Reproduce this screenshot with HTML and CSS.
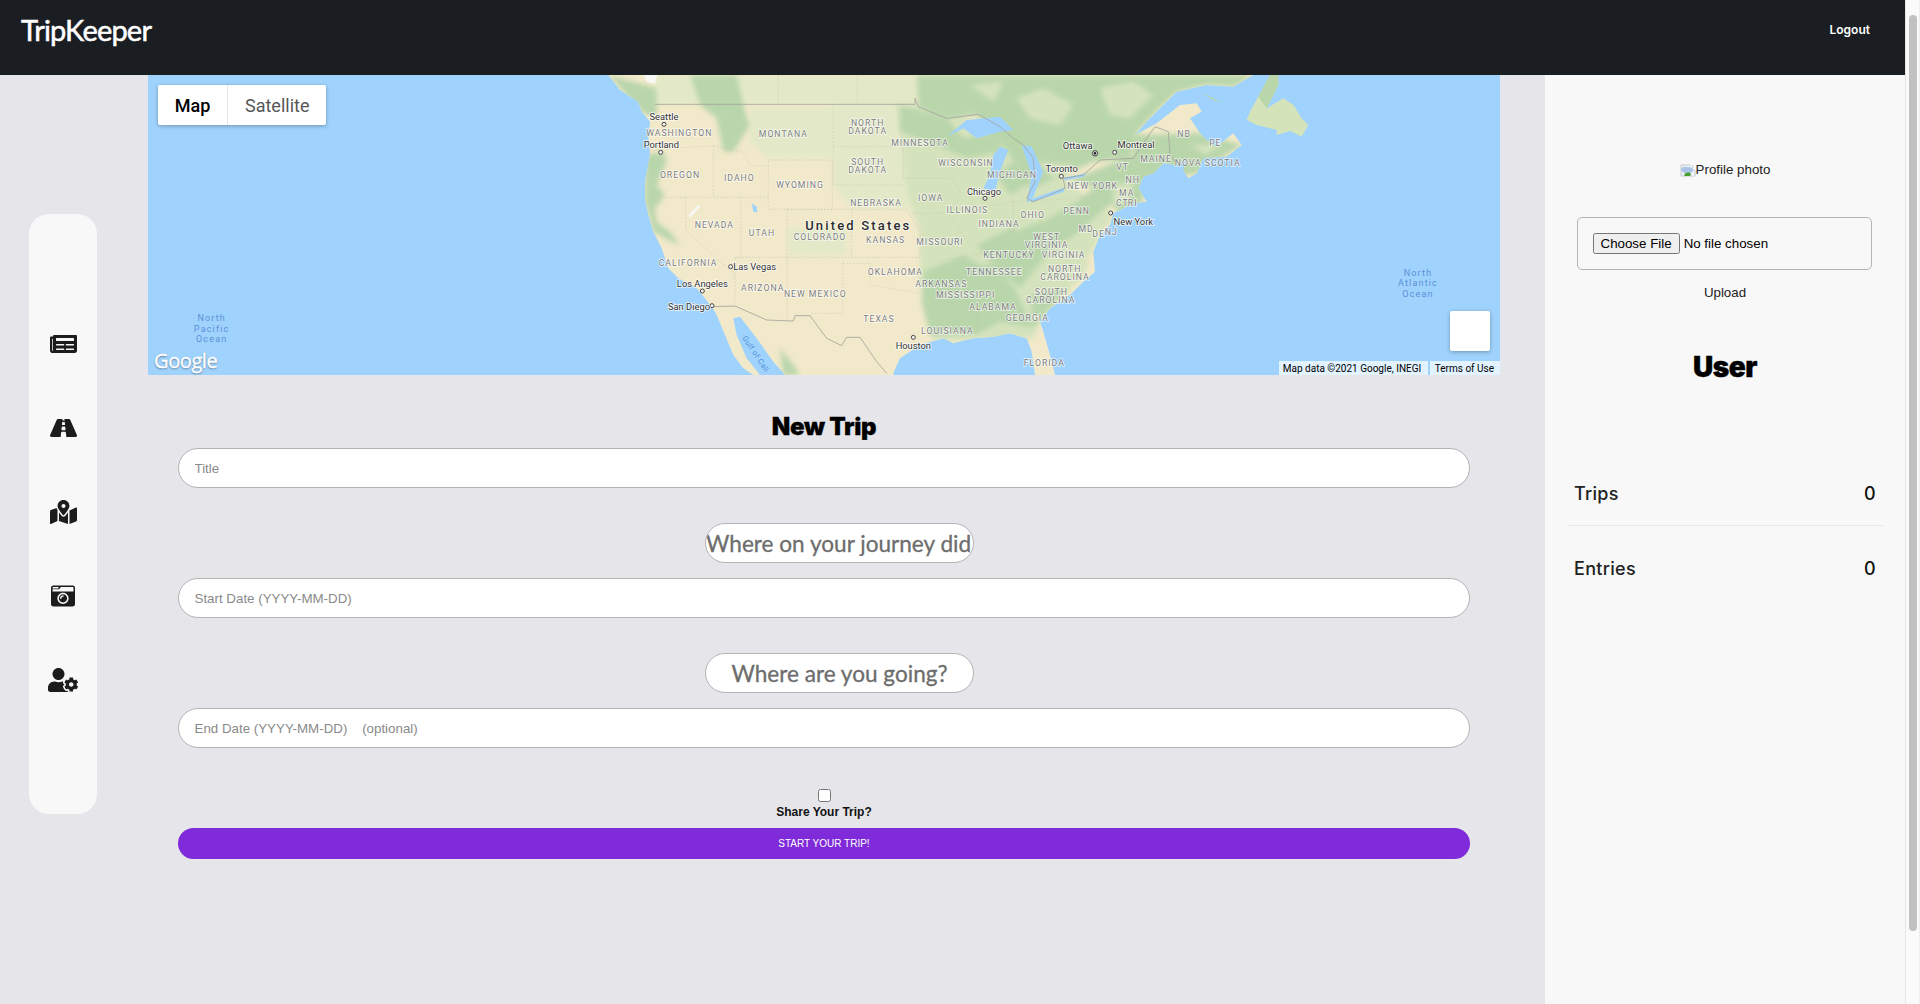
FILE: index.html
```html
<!DOCTYPE html>
<html lang="en">
<head>
<meta charset="utf-8">
<title>TripKeeper</title>
<link rel="stylesheet" href="styles.css">
</head>
<body>
<div class="window">
  <div class="page">
    <header class="topbar">
      <a class="logo">TripKeeper</a>
      <a class="logout">Logout</a>
    </header>
    <div class="content">
      <aside class="rail">
        <nav class="rail-pill">
          <svg class="icon" viewBox="0 0 576 512"><path d="M552 64H88c-13.255 0-24 10.745-24 24v8H24c-13.255 0-24 10.745-24 24v272c0 30.928 25.072 56 56 56h472c26.51 0 48-21.49 48-48V88c0-13.255-10.745-24-24-24zM56 400a8 8 0 0 1-8-8V144h16v248a8 8 0 0 1-8 8zm236-16H140c-6.627 0-12-5.373-12-12v-8c0-6.627 5.373-12 12-12h152c6.627 0 12 5.373 12 12v8c0 6.627-5.373 12-12 12zm208 0H348c-6.627 0-12-5.373-12-12v-8c0-6.627 5.373-12 12-12h152c6.627 0 12 5.373 12 12v8c0 6.627-5.373 12-12 12zm-208-96H140c-6.627 0-12-5.373-12-12v-8c0-6.627 5.373-12 12-12h152c6.627 0 12 5.373 12 12v8c0 6.627-5.373 12-12 12zm208 0H348c-6.627 0-12-5.373-12-12v-8c0-6.627 5.373-12 12-12h152c6.627 0 12 5.373 12 12v8c0 6.627-5.373 12-12 12zm0-96H140c-6.627 0-12-5.373-12-12v-40c0-6.627 5.373-12 12-12h360c6.627 0 12 5.373 12 12v40c0 6.627-5.373 12-12 12z"/></svg>
          <svg class="icon" viewBox="0 0 576 512"><path d="M573.19 402.67l-139.79-320C428.43 71.29 417.6 64 405.68 64h-97.59l2.45 23.16c.5 4.72-3.21 8.84-7.96 8.84h-29.16c-4.75 0-8.46-4.12-7.96-8.84L267.91 64h-97.59c-11.93 0-22.76 7.29-27.73 18.67L2.8 402.67C-6.45 423.86 8.31 448 30.54 448h196.84l10.31-97.68c.86-8.14 7.72-14.32 15.91-14.32h68.8c8.19 0 15.05 6.18 15.91 14.32L348.62 448h196.84c22.23 0 36.99-24.14 27.73-45.33zM260.4 135.16a8 8 0 0 1 7.96-7.16h39.29c4.09 0 7.53 3.09 7.96 7.16l4.6 43.58c.75 7.09-4.81 13.26-11.93 13.26h-40.54c-7.13 0-12.68-6.17-11.93-13.26l4.6-43.58zM315.64 304h-55.29c-9.5 0-16.91-8.23-15.91-17.68l5.07-48c.86-8.14 7.72-14.32 15.91-14.32h45.15c8.19 0 15.05 6.18 15.91 14.32l5.07 48c1 9.45-6.41 17.68-15.91 17.68z"/></svg>
          <svg class="icon" viewBox="0 0 576 512"><path d="M288 0c-69.59 0-126 56.41-126 126 0 56.26 82.35 158.8 113.9 196.02 6.39 7.54 17.82 7.54 24.2 0C331.65 284.8 414 182.26 414 126 414 56.41 357.59 0 288 0zm0 168c-23.2 0-42-18.8-42-42s18.8-42 42-42 42 18.8 42 42-18.8 42-42 42zM20.12 215.95A32.006 32.006 0 0 0 0 245.66v250.32c0 11.32 11.43 19.06 21.94 14.86L160 448V214.92c-8.84-15.98-16.07-31.54-21.25-46.42L20.12 215.95zM288 359.67c-14.07 0-27.38-6.18-36.51-16.96-19.66-23.2-40.57-49.62-59.49-76.72V448l192 64V265.99c-18.92 27.09-39.82 53.52-59.49 76.72-9.13 10.79-22.44 16.96-36.51 16.96zm266.06-198.51L416 224v288l139.88-55.95A31.996 31.996 0 0 0 576 426.34V176.02c0-11.32-11.43-19.06-21.94-14.86z"/></svg>
          <svg class="icon" viewBox="0 0 512 512"><path d="M48 32C21.5 32 0 53.5 0 80v352c0 26.5 21.5 48 48 48h416c26.5 0 48-21.5 48-48V80c0-26.5-21.5-48-48-48H48zm0 32h106c3.3 0 6 2.7 6 6v20c0 3.3-2.7 6-6 6H38c-3.3 0-6-2.7-6-6V80c0-8.8 7.2-16 16-16zm426 96H38c-3.3 0-6-2.7-6-6v-36c0-3.3 2.7-6 6-6h138l30.2-45.3c1.1-1.7 3-2.7 5-2.7H464c8.8 0 16 7.2 16 16v74c0 3.3-2.7 6-6 6zM256 424c-66.2 0-120-53.8-120-120s53.8-120 120-120 120 53.8 120 120-53.8 120-120 120zm0-208c-48.5 0-88 39.5-88 88s39.5 88 88 88 88-39.5 88-88-39.5-88-88-88zm-48 104c-8.8 0-16-7.2-16-16 0-35.3 28.7-64 64-64 8.8 0 16 7.2 16 16s-7.2 16-16 16c-17.6 0-32 14.4-32 32 0 8.8-7.2 16-16 16z"/></svg>
          <svg class="icon" viewBox="0 0 640 512"><path d="M610.5 373.3c2.6-14.1 2.6-28.5 0-42.6l25.8-14.9c3-1.7 4.3-5.2 3.3-8.5-6.7-21.6-18.2-41.2-33.2-57.4-2.3-2.5-6-3.1-9-1.4l-25.8 14.9c-10.9-9.3-23.4-16.5-36.9-21.3v-29.8c0-3.4-2.4-6.4-5.7-7.1-22.3-5-45-4.8-66.2 0-3.3.7-5.7 3.7-5.7 7.1v29.8c-13.5 4.8-26 12-36.9 21.3l-25.8-14.9c-2.9-1.7-6.7-1.1-9 1.4-15 16.2-26.5 35.8-33.2 57.4-1 3.3.4 6.8 3.3 8.5l25.8 14.9c-2.6 14.1-2.6 28.5 0 42.6l-25.8 14.9c-3 1.7-4.3 5.2-3.3 8.5 6.7 21.6 18.2 41.1 33.2 57.4 2.3 2.5 6 3.1 9 1.4l25.8-14.9c10.9 9.3 23.4 16.5 36.9 21.3v29.8c0 3.4 2.4 6.4 5.7 7.1 22.3 5 45 4.8 66.2 0 3.3-.7 5.7-3.7 5.7-7.1v-29.8c13.5-4.8 26-12 36.9-21.3l25.8 14.9c2.9 1.7 6.7 1.1 9-1.4 15-16.2 26.5-35.8 33.2-57.4 1-3.3-.4-6.8-3.3-8.5l-25.8-14.9zM496 400.5c-26.8 0-48.5-21.8-48.5-48.5s21.8-48.5 48.5-48.5 48.5 21.8 48.5 48.5-21.7 48.5-48.5 48.5zM224 256c70.7 0 128-57.3 128-128S294.7 0 224 0 96 57.3 96 128s57.3 128 128 128zm201.2 226.5c-2.3-1.2-4.6-2.6-6.8-3.9l-7.9 4.6c-6 3.4-12.8 5.3-19.6 5.3-10.9 0-21.4-4.6-28.9-12.6-18.3-19.8-32.3-43.9-40.2-69.6-5.5-17.7 1.9-36.4 17.9-45.7l7.9-4.6c-.1-2.6-.1-5.2 0-7.8l-7.9-4.6c-16-9.2-23.4-28-17.9-45.7.9-2.9 2.2-5.8 3.2-8.7-3.8-.3-7.5-1.2-11.4-1.2h-16.7c-22.2 10.2-46.9 16-72.9 16s-50.6-5.8-72.9-16h-16.7C60.2 288 0 348.2 0 422.4V464c0 26.5 21.5 48 48 48h352c10.1 0 19.5-3.2 27.2-8.5-1.2-3.8-2-7.7-2-11.8v-9.2z"/></svg>
        </nav>
      </aside>

      <main class="center">
        <section class="map">
          <svg class="map-art" viewBox="-1356 0 4056 900" preserveAspectRatio="none">
            <defs>
              <clipPath id="land-clip"><polygon points="25,0 1960,0 1900,35 1820,30 1730,50 1680,100 1640,140 1605,180 1670,145 1740,90 1790,85 1805,110 1770,130 1800,175 1820,195 1850,215 1900,175 1925,210 1880,245 1810,250 1790,295 1765,310 1750,285 1760,255 1730,270 1690,265 1660,295 1630,305 1615,340 1640,380 1600,385 1570,400 1540,415 1530,450 1500,480 1480,530 1485,590 1450,620 1410,660 1350,700 1320,740 1330,770 1350,840 1365,900 1305,900 1295,830 1280,790 1230,775 1180,785 1120,790 1060,805 1030,790 960,810 900,850 880,895 880,900 555,900 520,860 470,790 420,725 400,730 410,780 440,850 480,900 460,900 430,880 400,840 375,780 350,720 335,695 290,640 235,610 205,580 185,520 160,470 145,420 135,370 135,320 150,240 145,190 150,140 125,110 115,80 60,45"/></clipPath>
              <filter id="soft" x="-5%" y="-5%" width="110%" height="110%"><feGaussianBlur stdDeviation="8"/></filter>
            </defs>
            <g clip-path="url(#land-clip)">
              <rect class="tan" x="0" y="0" width="2100" height="900"/>
              <g filter="url(#soft)">
                <polygon class="pale" points="170,0 950,0 950,88 170,88"/>
                <polygon class="pale" points="450,100 700,100 700,250 505,250 450,200"/>
                <polygon class="pale" points="565,460 740,460 740,540 565,540"/>
                <polygon class="mid" points="880,88 945,88 1200,160 1380,305 1540,420 1480,520 1400,660 1320,740 1300,790 1000,800 960,620 960,470 910,330 880,250"/>
                <polygon class="pale" points="700,88 890,88 925,400 755,400 700,330"/>
                <polygon class="forest" points="950,0 1960,0 1900,35 1820,30 1730,50 1680,100 1640,140 1605,180 1590,250 1480,260 1380,305 1300,340 1200,200 1130,120 1040,130 955,95"/>
                <polygon class="forest" points="1605,180 1800,175 1925,210 1790,295 1640,320 1620,400 1560,420 1500,340 1400,320 1600,240"/>
                <polygon class="forest" points="270,0 410,0 440,130 450,150 400,230 370,230 350,130 300,90"/>
                <polygon class="forest" points="25,0 170,40 170,130 130,115"/>
                <polygon class="forest" points="135,240 190,230 200,260 170,330 195,360 165,400 170,440 210,470 240,510 215,500 160,470 135,380"/>
                <polygon class="forest" points="900,90 1040,130 1090,190 1200,170 1200,230 1100,250 1010,210 900,170"/>
                <polygon class="forest" points="970,590 1090,540 1140,570 1190,570 1250,650 1300,760 1200,740 1130,780 990,780 965,680"/>
                <polygon class="forest" points="1130,510 1250,450 1330,440 1430,380 1540,290 1600,300 1590,350 1490,420 1440,470 1360,520 1300,590 1260,640 1180,570"/>
                <polygon class="forest" points="1290,660 1400,640 1350,700 1300,760"/>
                <polygon class="forest" points="1190,300 1240,260 1300,320 1230,360"/>
                <polygon class="forest" points="540,820 580,870 600,900 550,900"/>
                <polygon class="mid" points="1250,70 1330,40 1420,90 1380,150 1290,130"/>
                <polygon class="mid" points="1500,40 1600,20 1660,60 1590,130 1530,120"/>
                <polygon class="mid" points="1110,30 1210,20 1180,80"/>
                <polygon class="mid" points="1310,260 1420,270 1360,310"/>
                <polygon class="mid" points="1220,420 1310,380 1360,420 1250,470"/>
                <polygon class="mid" points="1380,560 1470,560 1440,620 1380,640"/>
                <polygon class="mid" points="1540,330 1600,320 1590,370 1540,390"/>
                <polygon class="mid" points="1770,210 1860,210 1820,240"/>
              </g>
              <polygon class="snow" points="130,0 172,0 165,28 140,20"/>
              <polygon class="snow" points="265,420 295,388 300,396 270,428"/>
            </g>
            <polygon class="tan-green" points="2035,0 2010,0 1950,110 1940,135 1970,150 2030,165 2030,180 2070,168 2105,185 2125,150 2105,130 2080,90 2050,70 2000,100 2035,30"/>
            <polygon class="forest" points="2035,0 2010,0 1975,65 2000,100 2035,30"/>
            <polygon class="forest" points="1800,50 1870,85 1840,75"/>
            <polygon class="water" points="1040,185 1100,135 1200,125 1240,165 1200,170 1130,190 1090,160"/>
            <polygon class="water" points="1150,340 1170,300 1180,240 1200,215 1225,225 1200,290 1185,350"/>
            <polygon class="water" points="1265,210 1295,215 1330,290 1300,365 1280,385 1295,300"/>
            <polygon class="water" points="1285,375 1390,338 1392,350 1295,382"/>
            <polygon class="water" points="1390,308 1460,295 1450,305 1395,316"/>
            <polygon class="water" points="455,385 470,395 472,412 460,410"/>
            <g class="states">
              <polyline points="150,225 245,218 340,212 340,365"/>
              <polyline points="150,367 505,367"/>
              <polyline points="340,212 430,232 450,272 505,272"/>
              <polyline points="422,367 422,547 405,547 405,690"/>
              <polyline points="257,367 257,465 405,600"/>
              <polyline points="405,547 960,547"/>
              <polyline points="505,255 697,255 697,403 505,403 505,255"/>
              <polyline points="562,403 755,403 755,547"/>
              <polyline points="562,403 562,735"/>
              <polyline points="728,565 728,715 630,715"/>
              <polyline points="728,565 810,565 810,630 960,655"/>
              <polyline points="700,88 700,330 910,330"/>
              <polyline points="700,215 905,215"/>
              <polyline points="755,403 920,403 960,470 960,547"/>
              <polyline points="890,88 910,215 910,310 1060,310 1085,360 1045,415 930,415"/>
              <polyline points="535,0 535,88"/>
              <polyline points="772,0 772,88"/>
              <polyline points="1045,415 1130,540 1000,560"/>
              <polyline points="1130,400 1240,380 1240,470 1130,540"/>
              <polyline points="1000,680 1130,680 1130,780"/>
              <polyline points="1240,380 1500,365 1490,420"/>
              <polyline points="1380,130 1380,230"/>
            </g>
            <polyline class="border" points="165,88 945,88 945,70 955,95 1040,130 1135,118 1200,155 1240,190 1270,210 1300,250 1305,320 1280,370 1300,380 1395,340 1390,310 1450,300 1500,255 1600,250 1640,190 1665,155 1705,170 1710,240 1730,265"/>
            <polyline class="border" points="335,695 405,693 500,735 580,738 585,722 630,722 680,790 725,812 740,787 780,787 830,860 860,895"/>

            <text class="oc" x="-1165" y="729">North</text>
            <text class="oc" x="-1165" y="761">Pacific</text>
            <text class="oc" x="-1165" y="793">Ocean</text>
            <text class="oc" x="2454" y="593">North</text>
            <text class="oc" x="2454" y="625">Atlantic</text>
            <text class="oc" x="2454" y="657">Ocean</text>
            <text class="gulf" transform="translate(432 785) rotate(56)">Gulf of Cali</text>

            <text class="st" x="238" y="173">WASHINGTON</text>
            <text class="st" x="550" y="176">MONTANA</text>
            <text class="st" x="803" y="144">NORTH</text>
            <text class="st" x="803" y="168">DAKOTA</text>
            <text class="st" x="960" y="204">MINNESOTA</text>
            <text class="st" x="1098" y="263">WISCONSIN</text>
            <text class="st" x="803" y="261">SOUTH</text>
            <text class="st" x="803" y="285">DAKOTA</text>
            <text class="st" x="240" y="299">OREGON</text>
            <text class="st" x="418" y="310">IDAHO</text>
            <text class="st" x="600" y="329">WYOMING</text>
            <text class="st" x="828" y="385">NEBRASKA</text>
            <text class="st" x="992" y="368">IOWA</text>
            <text class="st" x="1102" y="404">ILLINOIS</text>
            <text class="st" x="343" y="449">NEVADA</text>
            <text class="st" x="486" y="473">UTAH</text>
            <text class="st" x="660" y="487">COLORADO</text>
            <text class="st" x="857" y="495">KANSAS</text>
            <text class="st" x="1020" y="502">MISSOURI</text>
            <text class="st" x="264" y="565">CALIFORNIA</text>
            <text class="st" x="488" y="638">ARIZONA</text>
            <text class="st" x="646" y="658">NEW MEXICO</text>
            <text class="st" x="886" y="592">OKLAHOMA</text>
            <text class="st" x="1024" y="627">ARKANSAS</text>
            <text class="st" x="1097" y="661">MISSISSIPPI</text>
            <text class="st" x="837" y="731">TEXAS</text>
            <text class="st" x="1042" y="768">LOUISIANA</text>
            <text class="st" x="1179" y="697">ALABAMA</text>
            <text class="st" x="1183" y="592">TENNESSEE</text>
            <text class="st" x="1227" y="541">KENTUCKY</text>
            <text class="st" x="1236" y="299">MICHIGAN</text>
            <text class="st" x="1197" y="446">INDIANA</text>
            <text class="st" x="1298" y="420">OHIO</text>
            <text class="st" x="1430" y="409">PENN</text>
            <text class="st" x="1478" y="334">NEW YORK</text>
            <text class="st" x="1340" y="485">WEST</text>
            <text class="st" x="1340" y="510">VIRGINIA</text>
            <text class="st" x="1391" y="541">VIRGINIA</text>
            <text class="st" x="1394" y="582">NORTH</text>
            <text class="st" x="1395" y="607">CAROLINA</text>
            <text class="st" x="1354" y="650">SOUTH</text>
            <text class="st" x="1352" y="675">CAROLINA</text>
            <text class="st" x="1282" y="729">GEORGIA</text>
            <text class="st" x="1333" y="863">FLORIDA</text>
            <text class="st" x="1458" y="463">MD</text>
            <text class="st" x="1496" y="478">DE</text>
            <text class="st" x="1534" y="471">NJ</text>
            <text class="st" x="1568" y="276">VT</text>
            <text class="st" x="1598" y="314">NH</text>
            <text class="st" x="1580" y="353">MA</text>
            <text class="st" x="1567" y="383">CT</text>
            <text class="st" x="1598" y="383">RI</text>
            <text class="st" x="1668" y="253">MAINE</text>
            <text class="st" x="1823" y="263">NOVA SCOTIA</text>
            <text class="st" x="1752" y="176">NB</text>
            <text class="st" x="1846" y="204">PE</text>

            <text class="country" x="775" y="450">United States</text>

            <circle class="dot" cx="192" cy="148" r="6"/><text class="ct" x="192" y="125">Seattle</text>
            <circle class="dot" cx="182" cy="232" r="6"/><text class="ct" x="184" y="209">Portland</text>
            <circle class="dot" cx="392" cy="575" r="6"/><text class="ct" x="464" y="575">Las Vegas</text>
            <circle class="dot" cx="307" cy="648" r="6"/><text class="ct" x="307" y="625">Los Angeles</text>
            <circle class="dot" cx="336" cy="692" r="6"/><text class="ct" x="267" y="693">San Diego</text>
            <circle class="dot" cx="1155" cy="370" r="6"/><text class="ct" x="1152" y="349">Chicago</text>
            <circle class="dot" cx="1384" cy="304" r="6"/><text class="ct" x="1385" y="281">Toronto</text>
            <circle class="dot" cx="1485" cy="235" r="8"/><circle class="dot-in" cx="1485" cy="235" r="4"/><text class="ct" x="1433" y="212">Ottawa</text>
            <circle class="dot" cx="1544" cy="232" r="6"/><text class="ct" x="1608" y="209">Montreal</text>
            <circle class="dot" cx="1532" cy="414" r="6"/><text class="ct" x="1600" y="439">New York</text>
            <circle class="dot" cx="940" cy="787" r="6"/><text class="ct" x="940" y="812">Houston</text>
          </svg>

          <div class="map-type">
            <span class="map-type-btn is-on">Map</span>
            <span class="map-type-btn">Satellite</span>
          </div>
          <span class="google">Google</span>
          <div class="map-square"></div>
          <div class="attrib">
            <span class="attrib-item attrib-data">Map data ©2021 Google, INEGI</span>
            <span class="attrib-item">Terms of Use</span>
          </div>
        </section>

        <form class="trip-form">
          <h2 class="form-title">New Trip</h2>
          <input class="field" type="text" placeholder="Title">
          <input class="place" type="text" placeholder="Where on your journey did you start?">
          <input class="field field-near" type="text" placeholder="Start Date (YYYY-MM-DD)">
          <input class="place" type="text" placeholder="Where are you going?">
          <input class="field field-near" type="text" placeholder="End Date (YYYY-MM-DD)    (optional)">
          <label class="share">
            <input class="share-box" type="checkbox">
            <span>Share Your Trip?</span>
          </label>
          <button class="submit" type="button">START YOUR TRIP!</button>
        </form>
      </main>

      <aside class="panel">
        <div class="photo">
          <svg class="broken" viewBox="0 0 16 16">
            <path class="broken-frame" d="M1 3h10l2 1v3l2 2v5H1z"/>
            <path class="broken-sky" d="M1 8c0-3 4-4 6-3s6-1 6 1v3l-2 2H4z"/>
            <path class="broken-grass" d="M4 13c2-3 5-3 7-1l-1 2H5z"/>
            <path class="broken-tear" d="M11 1v4l3 2M12 11l2 3"/>
          </svg>
          <span>Profile photo</span>
        </div>
        <div class="upload-box"><input class="file" type="file"></div>
        <div class="upload">Upload</div>
        <h2 class="user">User</h2>
        <div class="stat stat-line"><span>Trips</span><span class="stat-num">0</span></div>
        <div class="stat"><span>Entries</span><span class="stat-num">0</span></div>
      </aside>
    </div>
  </div>
  <div class="scrollbar"><div class="thumb"></div></div>
</div>
</body>
</html>
```
FILE: styles.css
```css
* { box-sizing: border-box; }
html, body { margin: 0; height: 100%; overflow: hidden; }
body { background: #e5e5ea; font-family: "Liberation Sans", Arial, sans-serif; color: #1c1c1c; }

.window { display: flex; height: 1004px; }
.page { width: 1905px; display: flex; flex-direction: column; }

.topbar {
  height: 75px; flex: none; background: #1a1e22; display: flex;
  justify-content: space-between; align-items: flex-start; padding: 11px 35px 0 21px;
}
.logo { font-family: Lato, sans-serif; font-size: 29px; line-height: 38px; font-weight: 400; color: #fff; letter-spacing: -0.8px; -webkit-text-stroke: 0.5px #fff; }
.logout { font-family: Inter, sans-serif; font-size: 12px; line-height: 16px; font-weight: 600; color: #fff; margin-top: 11px; }

.content { flex: 1; display: flex; min-height: 0; }

.rail { width: 148px; flex: none; padding: 139px 0 0 29px; }
.rail-pill {
  width: 68px; height: 600px; background: #f8f8f8; border-radius: 20px; padding-bottom: 4px;
  display: flex; flex-direction: column; align-items: center; justify-content: center; gap: 60px;
}
.icon { height: 24px; width: auto; display: block; fill: #1c1c1c; }

.center { width: 1352px; flex: none; margin-right: 45px; }

.map { position: relative; height: 300px; background: #9fd3fd; overflow: hidden; }
.map-art { display: block; width: 1352px; height: 300px; }
.tan { fill: #f1e9c9; }
.tan-green { fill: #d4e3ba; }
.pale { fill: #e3e9c8; }
.mid { fill: #d5e3bc; }
.forest { fill: #b9d6ab; }
.snow { fill: #f6f6f2; }
.water { fill: #9fd3fd; }
.states polyline { fill: none; stroke: #c2c2b2; stroke-width: 1.5; stroke-dasharray: 5 5; }
.border { fill: none; stroke: #a3a39c; stroke-width: 2.5; }
.map-art text { text-anchor: middle; dominant-baseline: central; font-family: Roboto, sans-serif; }
.st { font-size: 26px; letter-spacing: 3px; fill: #7d7d7d; stroke: rgba(255,255,255,.7); stroke-width: 5px; paint-order: stroke; }
.ct { font-size: 28px; fill: #333; stroke: rgba(255,255,255,.8); stroke-width: 5px; paint-order: stroke; }
.country { font-size: 39px; font-weight: 500; letter-spacing: 6.5px; fill: #2c2c2c; stroke: rgba(255,255,255,.8); stroke-width: 5px; paint-order: stroke; }
.oc { font-size: 27px; letter-spacing: 3.5px; fill: #5b8fd9; }
.map-art .gulf { font-size: 23px; letter-spacing: 1px; fill: #4f8fdc; text-anchor: start; }
.dot { fill: #f4f4f4; stroke: #444; stroke-width: 3; }
.dot-in { fill: #222; }

.map-type {
  position: absolute; left: 10px; top: 10px; height: 40px; display: flex; background: #fff;
  border-radius: 2px; box-shadow: 0 1px 4px rgba(0,0,0,.3); font-family: Roboto, sans-serif; font-size: 18px;
}
.map-type-btn { padding: 0 17px; line-height: 42px; color: #565656; }
.map-type-btn.is-on { font-weight: 500; color: #000; border-right: 1px solid #e6e6e6; width: 70px; text-align: center; padding: 0; }
.google {
  position: absolute; left: 6px; top: 273px; font-family: "Open Sans", sans-serif; font-size: 20px; line-height: 26px;
  color: #fff; letter-spacing: -0.4px; -webkit-text-stroke: 0.3px #fff; text-shadow: 0 1px 2px rgba(0,0,0,.45);
}
.map-square {
  position: absolute; right: 10px; top: 236px; width: 40px; height: 40px; background: #fff;
  border-radius: 2px; box-shadow: 0 1px 4px rgba(0,0,0,.3);
}
.attrib { position: absolute; right: 0; bottom: 0; height: 14px; display: flex; gap: 2px; font-family: Roboto, sans-serif; font-size: 10px; line-height: 15px; color: #000; white-space: nowrap; }
.attrib-item { background: rgba(255,255,255,.7); padding: 0 6px 0 5px; }
.attrib-data { width: 149px; padding-left: 4px; padding-right: 0; }

.trip-form { padding: 0 30px; display: flex; flex-direction: column; align-items: stretch; }
.form-title { margin: 36px 0 0; height: 37px; font-family: Inter, sans-serif; font-weight: 900; font-size: 24px; line-height: 32px; color: #000; text-align: center; letter-spacing: -0.3px; -webkit-text-stroke: 0.3px #000; }
.field {
  height: 40px; border: 1px solid #b4b4b4; border-radius: 20px; background: #fff; padding: 0 15.5px;
  font: 13.33px "Liberation Sans", Arial, sans-serif; outline: none;
}
.field::placeholder { color: #8a8a8a; opacity: 1; }
.field-near { margin-top: 15px; }
.place {
  width: 269px; height: 40px; margin: 35px 0 0 527px; padding: 0; border: 1px solid #b4b4b4; border-radius: 20px;
  background: #fff; text-align: center; font-family: Lato, sans-serif; font-size: 22.6px; outline: none;
  -webkit-text-stroke: 0.3px #6d6d6d;
}
.place::placeholder { color: #6d6d6d; opacity: 1; }
.share { margin-top: 41px; display: flex; flex-direction: column; align-items: center; font-size: 12px; font-weight: 700; line-height: 14px; color: #111; }
.share-box { width: 13px; height: 13px; margin: 0 0 3px; }
.submit {
  margin-top: 9px; height: 31px; border: 0; border-radius: 16px; background: #802bda; color: #fff;
  font: 10px "Liberation Sans", Arial, sans-serif;
}

.panel { width: 360px; flex: none; background: #f8f8f8; display: flex; flex-direction: column; align-items: center; padding: 87px 22px 0; }
.photo { height: 16px; display: flex; align-items: center; font-size: 13.33px; line-height: 16px; color: #222; }
.broken { width: 16px; height: 16px; flex: none; }
.broken-frame { fill: #eef1f5; stroke: #b8bcc2; stroke-width: .8; }
.broken-sky { fill: #a9c4e6; }
.broken-grass { fill: #4aa02c; }
.broken-tear { fill: none; stroke: #fff; stroke-width: 1; }
.upload-box { width: 295px; height: 53px; margin: 39px 0 0 -2px; border: 1px solid #b4b4b4; border-radius: 5px; padding: 0 15px; display: flex; align-items: center; }
.file { font: 13.33px "Liberation Sans", Arial, sans-serif; color: #000; width: 260px; }
.upload { margin-top: 15px; font-size: 13.33px; line-height: 16px; color: #222; }
.user { margin: 49px 0 0; font-family: Inter, sans-serif; font-weight: 900; font-size: 28px; line-height: 34px; color: #000; letter-spacing: -0.4px; -webkit-text-stroke: 0.4px #000; }
.stat {
  align-self: stretch; margin: 0; height: 84px; display: flex; justify-content: space-between; align-items: center;
  padding: 0 7px; font-family: Inter, sans-serif; font-size: 18px; font-weight: 500; letter-spacing: 0.3px; color: #222;
}
.stat-line { margin-top: 77px; height: 65px; border-bottom: 1px solid #e8e8e8; }
.stat-num { color: #111; }

.scrollbar { width: 15px; flex: none; background: #fafafa; border-left: 1px solid #e6e6e6; border-right: 1px solid #eee; padding: 15px 2px 0 3px; }
.thumb { width: 8px; height: 916px; background: #c1c1c1; border-radius: 4px; }
```
